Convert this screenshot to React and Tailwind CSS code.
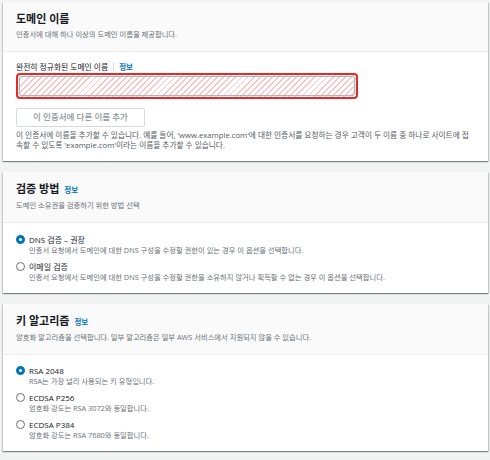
import React from "react";

const font = { fontFamily: '"Open Sans", "Noto Sans CJK KR", sans-serif' };

const Info = () => (
  <span className="text-[7.5px] font-bold text-[#0073bb] leading-[14px]">정보</span>
);

const CardHeader = ({ title, desc, info = true }) => (
  <div className="bg-[#fafafa] border-b border-[#eaeded] px-[13px] pt-[10px] pb-[12px]">
    <div className="flex items-baseline gap-[5px] leading-[14px]">
      <h2 className="text-[11px] font-bold text-[#16191f] leading-[14px]">{title}</h2>
      {info && <Info />}
    </div>
    <p className="mt-[3px] text-[7.3px] leading-[10px] text-[#687078]">{desc}</p>
  </div>
);

const Radio = ({ checked, label, desc }) => (
  <div className="flex gap-[4px]">
    <div className="h-[11px] flex items-center">
      {checked ? (
        <span className="block w-[9px] h-[9px] rounded-full bg-white border-[3px] border-[#0073bb]" />
      ) : (
        <span className="block w-[9px] h-[9px] rounded-full bg-white border border-[#687078]" />
      )}
    </div>
    <div>
      <div className="text-[8px] leading-[11px] text-[#16191f]">{label}</div>
      <div className="text-[7.3px] leading-[10px] text-[#687078]">{desc}</div>
    </div>
  </div>
);

const Card = ({ children }) => (
  <div className="bg-white shadow-[0_1px_1px_0_rgba(0,28,36,0.3),1px_1px_1px_0_rgba(0,28,36,0.15),-1px_1px_1px_0_rgba(0,28,36,0.15)]">
    {children}
  </div>
);

export default function App() {
  return (
    <div
      style={font}
      className="w-[490px] h-[460px] overflow-hidden bg-[#f2f3f3] pl-[3px] pr-[2px] pt-[2px] flex flex-col gap-[11px]"
    >
      {/* 도메인 이름 */}
      <Card>
        <CardHeader
          title="도메인 이름"
          desc="인증서에 대해 하나 이상의 도메인 이름을 제공합니다."
          info={false}
        />
        <div className="px-[13px] pt-[10px] pb-[11px]">
          <div className="flex items-center gap-[5px] leading-[10px]">
            <span className="text-[7.8px] text-[#16191f] leading-[10px]">완전히 정규화된 도메인 이름</span>
            <span className="w-px h-[8px] bg-[#d5dbdb]" />
            <span className="text-[7.5px] font-bold text-[#0073bb] leading-[10px]">정보</span>
          </div>
          <div className="mt-[1px] w-[342px] h-[26px] rounded-[4px] border-2 border-[#e02b2b] p-[1px] bg-[repeating-linear-gradient(135deg,#fbc4c4_0_1.3px,transparent_1.3px_4.3px)]">
            <div className="w-full h-full rounded-[2px] border border-[#aab7b8]" />
          </div>
          <button className="mt-[9px] w-[129px] h-[19px] border border-[#d5dbdb] rounded-[2px] bg-white text-[8.5px] font-medium text-[#879596] leading-none">
            이 인증서에 다른 이름 추가
          </button>
          <p className="mt-[3px] text-[7.7px] leading-[10px] text-[#545b64]">
            이 인증서에 이름을 추가할 수 있습니다. 예를 들어, 'www.example.com'에 대한 인증서를 요청하는 경우 고객이 두 이름 중 하나로 사이트에 접속할 수 있도록 'example.com'이라는 이름을 추가할 수 있습니다.
          </p>
        </div>
      </Card>

      {/* 검증 방법 */}
      <Card>
        <CardHeader title="검증 방법" desc="도메인 소유권을 검증하기 위한 방법 선택" />
        <div className="px-[13px] pt-[11px] pb-[11px] flex flex-col gap-[6px]">
          <Radio
            checked
            label="DNS 검증 – 권장"
            desc="인증서 요청에서 도메인에 대한 DNS 구성을 수정할 권한이 있는 경우 이 옵션을 선택합니다."
          />
          <Radio
            label="이메일 검증"
            desc="인증서 요청에서 도메인에 대한 DNS 구성을 수정할 권한을 소유하지 않거나 획득할 수 없는 경우 이 옵션을 선택합니다."
          />
        </div>
      </Card>

      {/* 키 알고리즘 */}
      <Card>
        <CardHeader
          title="키 알고리즘"
          desc="암호화 알고리즘을 선택합니다. 일부 알고리즘은 일부 AWS 서비스에서 지원되지 않을 수 있습니다."
        />
        <div className="px-[13px] pt-[10px] pb-[11px] flex flex-col gap-[6px]">
          <Radio checked label="RSA 2048" desc="RSA는 가장 널리 사용되는 키 유형입니다." />
          <Radio label="ECDSA P256" desc="암호화 강도는 RSA 3072와 동일합니다." />
          <Radio label="ECDSA P384" desc="암호화 강도는 RSA 7680와 동일합니다." />
        </div>
      </Card>
    </div>
  );
}
